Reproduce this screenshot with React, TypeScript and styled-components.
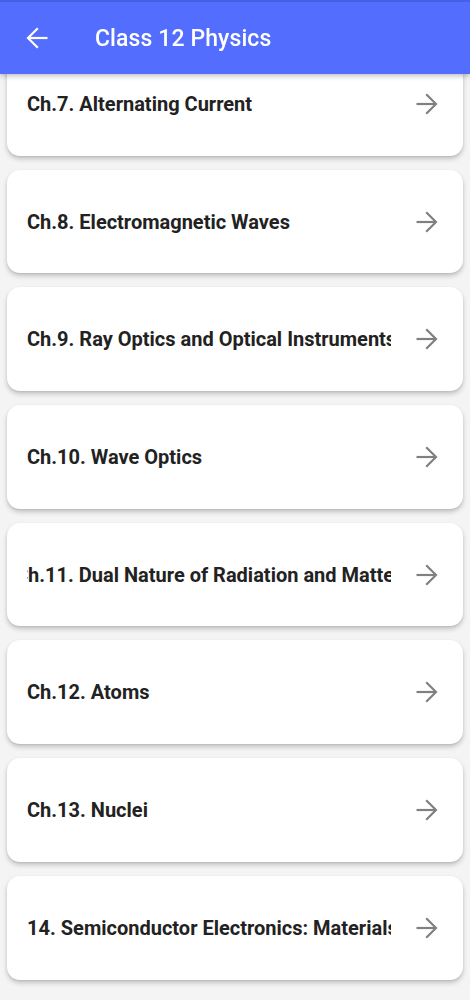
import React from "react";
import styled, { createGlobalStyle } from "styled-components";

const Global = createGlobalStyle`
  html, body { margin: 0; padding: 0; background: #f4f4f4; }
  body { font-family: Roboto, "Noto Sans", Arial, sans-serif; }
  * { box-sizing: border-box; }
`;

const Page = styled.div`
  width: 470px;
  height: 1000px;
  overflow: hidden;
  background: #f4f4f4;
`;

const AppBar = styled.header`
  position: fixed;
  top: 0;
  left: 0;
  width: 470px;
  height: 74px;
  z-index: 10;
  display: flex;
  align-items: center;
  padding: 0 0 0 26px;
  background: #536dfe;
  border-top: 2px solid #4560e8;
  box-shadow: 0 2px 5px rgba(0, 0, 0, 0.25);
`;

const BackButton = styled.button`
  display: flex;
  align-items: center;
  justify-content: center;
  padding: 0;
  border: none;
  background: transparent;
  width: 22px;
  height: 22px;
`;

const Title = styled.h1`
  margin: 0 0 0 47px;
  font-size: 23px;
  font-weight: 500;
  color: #ffffff;
  letter-spacing: 0.1px;
`;

const List = styled.main`
  display: flex;
  flex-direction: column;
  gap: 14px;
  padding: 52px 7px 20px;
`;

const Card = styled.div`
  height: 103.7px;
  flex: none;
  display: flex;
  align-items: center;
  gap: 25px;
  padding: 0 25px 0 20px;
  background: #ffffff;
  border-radius: 13px;
  box-shadow: 0 3px 5px rgba(0, 0, 0, 0.2), 0 1px 2px rgba(0, 0, 0, 0.08);
`;

const TextWrap = styled.div`
  flex: 1;
  min-width: 0;
  overflow: hidden;
  white-space: nowrap;
`;

const ChapterName = styled.span<{ $shift: number }>`
  display: inline-block;
  font-size: 20px;
  font-weight: 700;
  color: #222222;
  transform: translateX(${(p) => -p.$shift}px);
`;

const ArrowBox = styled.span`
  flex: none;
  width: 22px;
  height: 22px;
  display: flex;
`;

const Arrow = ({ dir, color }: { dir: "left" | "right"; color: string }) => (
  <svg
    width="22"
    height="22"
    viewBox="0 0 22 22"
    fill="none"
    stroke={color}
    strokeWidth="2.2"
    style={dir === "left" ? { transform: "scaleX(-1)" } : undefined}
  >
    <path d="M0.5 11 H20" />
    <path d="M10.2 1.2 L20 11 L10.2 20.8" />
  </svg>
);

const chapters: { title: string; shift: number }[] = [
  { title: "Ch.7. Alternating Current", shift: 0 },
  { title: "Ch.8. Electromagnetic Waves", shift: 0 },
  { title: "Ch.9. Ray Optics and Optical Instruments", shift: 0 },
  { title: "Ch.10. Wave Optics", shift: 0 },
  { title: "Ch.11. Dual Nature of Radiation and Matter", shift: 12 },
  { title: "Ch.12. Atoms", shift: 0 },
  { title: "Ch.13. Nuclei", shift: 0 },
  { title: "Ch.14. Semiconductor Electronics: Materials, Devices and Simple Circuits", shift: 30 },
];

export default function App() {
  return (
    <Page>
      <Global />
      <AppBar>
        <BackButton aria-label="Back">
          <Arrow dir="left" color="#ffffff" />
        </BackButton>
        <Title>Class 12 Physics</Title>
      </AppBar>
      <List>
        {chapters.map((c) => (
          <Card key={c.title}>
            <TextWrap>
              <ChapterName $shift={c.shift}>{c.title}</ChapterName>
            </TextWrap>
            <ArrowBox>
              <Arrow dir="right" color="#808080" />
            </ArrowBox>
          </Card>
        ))}
      </List>
    </Page>
  );
}
